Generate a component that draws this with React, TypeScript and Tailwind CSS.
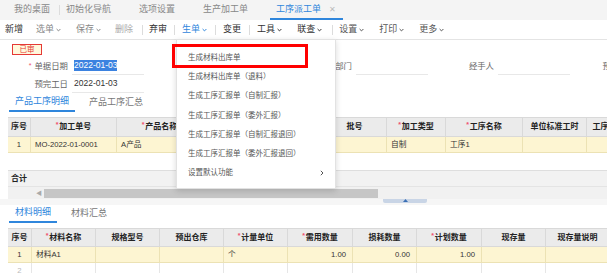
import React from "react";

type Col = { w: string; label: string; req?: boolean };

const cols1: Col[] = [
  { w: "w-[23px]", label: "序号" },
  { w: "w-[86px]", label: "加工单号", req: true },
  { w: "w-[86px]", label: "产品名称", req: true },
  { w: "w-[60px]", label: "规格型号" },
  { w: "w-[60px]", label: "单位" },
  { w: "w-[64px]", label: "批号" },
  { w: "w-[59px]", label: "加工类型", req: true },
  { w: "w-[77px]", label: "工序名称", req: true },
  { w: "w-[64px]", label: "单位标准工时" },
  { w: "w-[60px]", label: "工序计件单价" },
];

const cols2: Col[] = [
  { w: "w-[24px]", label: "序号" },
  { w: "w-[64px]", label: "材料名称", req: true },
  { w: "w-[64px]", label: "规格型号" },
  { w: "w-[64px]", label: "预出仓库" },
  { w: "w-[64px]", label: "计量单位", req: true },
  { w: "w-[65px]", label: "需用数量", req: true },
  { w: "w-[64px]", label: "损耗数量" },
  { w: "w-[65px]", label: "计划数量", req: true },
  { w: "w-[64px]", label: "现存量" },
  { w: "w-[64px]", label: "现存量说明" },
];

const menuItems = [
  "生成材料出库单",
  "生成材料出库单（退料）",
  "生成工序汇报单（自制汇报）",
  "生成工序汇报单（委外汇报）",
  "生成工序汇报单（自制汇报退回）",
  "生成工序汇报单（委外汇报退回）",
];

function Chevron() {
  return (
    <svg width="5" height="4" viewBox="0 0 5 4" className="ml-[2px]">
      <path d="M0.6 1 L2.5 2.9 L4.4 1" fill="none" stroke="currentColor" strokeWidth="1" />
    </svg>
  );
}

function Sep({ className }: { className: string }) {
  return <span className={`h-[10px] w-px bg-[#dcdcdc] ${className}`} />;
}

function HeaderRow({ cols, h }: { cols: Col[]; h: string }) {
  return (
    <div className={`flex ${h} bg-[#ebebeb] border-y border-[#d9d9d9]`}>
      {cols.map((c, i) => (
        <div
          key={i}
          className={`${c.w} shrink-0 flex items-center justify-center border-r border-[#d9d9d9] font-bold text-[8px] text-[#222] whitespace-nowrap overflow-hidden`}
        >
          {c.req && <span className="text-[#f0506e] text-[7px] mr-px -mt-[3px]">*</span>}
          {c.label}
        </div>
      ))}
    </div>
  );
}

function BodyRow({
  cols,
  cells,
  yellow,
  right,
}: {
  cols: Col[];
  cells: string[];
  yellow?: boolean;
  right?: number[];
}) {
  return (
    <div
      className={`flex h-[16px] border-b ${
        yellow ? "bg-[#fdf5d2] border-[#ece2b4]" : "bg-white border-[#e6e6e6]"
      }`}
    >
      {cols.map((c, i) => (
        <div
          key={i}
          className={`${c.w} shrink-0 flex items-center border-r ${
            yellow ? "border-[#ece2b4]" : "border-[#e6e6e6]"
          } text-[7.7px] whitespace-nowrap overflow-hidden ${
            i === 0
              ? "justify-center"
              : right && right.includes(i)
              ? "justify-end pr-[6px]"
              : "pl-[4px]"
          } ${yellow ? "text-[#333]" : "text-[#bbb]"}`}
        >
          {cells[i]}
        </div>
      ))}
    </div>
  );
}

export default function App() {
  return (
    <div className="relative w-[607px] h-[273px] overflow-hidden bg-white font-['Liberation_Sans','Noto_Sans_CJK_SC',sans-serif]">
      {/* page tabs */}
      <div className="flex items-center h-[20px] bg-[#f4f4f4] text-[9px] text-[#888] whitespace-nowrap">
        <span className="ml-[14px]">我的桌面</span>
        <Sep className="ml-[9px]" />
        <span className="ml-[6px]">初始化导航</span>
        <span className="ml-[28px]">选项设置</span>
        <span className="ml-[28px]">生产加工单</span>
        <div className="ml-[22px] h-[20px] w-[73px] flex items-center border-b-2 border-[#2f86dc] pt-[2px]">
          <span className="ml-[6px] text-[#2f86dc]">工序派工单</span>
          <span className="ml-[8px] text-[8px] text-[#bbb]">✕</span>
        </div>
      </div>

      {/* toolbar */}
      <div className="flex items-center h-[20px] border-b border-[#e4e4e4] text-[9px] whitespace-nowrap">
        <span className="ml-[5px] text-[#333]">新增</span>
        <span className="ml-[13px] flex items-center text-[#888]">选单<Chevron /></span>
        <span className="ml-[15px] flex items-center text-[#888]">保存<Chevron /></span>
        <span className="ml-[14px] text-[#aaa]">删除</span>
        <Sep className="ml-[9px]" />
        <span className="ml-[6px] text-[#333]">弃审</span>
        <Sep className="ml-[7px]" />
        <span className="ml-[7px] flex items-center text-[#2f86dc]">生单<Chevron /></span>
        <Sep className="ml-[8px]" />
        <span className="ml-[7px] text-[#333]">变更</span>
        <Sep className="ml-[8px]" />
        <span className="ml-[7px] flex items-center text-[#333]">工具<Chevron /></span>
        <span className="ml-[15px] flex items-center text-[#333]">联查<Chevron /></span>
        <Sep className="ml-[10px]" />
        <span className="ml-[6px] flex items-center text-[#555]">设置<Chevron /></span>
        <span className="ml-[15px] flex items-center text-[#555]">打印<Chevron /></span>
        <span className="ml-[15px] flex items-center text-[#555]">更多<Chevron /></span>
      </div>

      {/* header form */}
      <div className="pt-[4px]">
        <div className="ml-[12px] w-[30px] h-[11px] border border-[#e53935] bg-[#fff8dc] text-[#e53935] text-[7.5px] leading-[9px] text-center">
          已审
        </div>
        <div className="mt-[2px] flex h-[18px] text-[8.4px] whitespace-nowrap">
          <div className="ml-[2px] w-[142px] flex shrink-0">
            <div className="w-[66px] flex items-center justify-end text-[#666]">
              <span className="text-[#f0506e] text-[7px] mr-[3px]">*</span>单据日期
            </div>
            <div className="ml-[4px] w-[72px] flex items-center border-b border-[#e8e8e8] pl-[2px]">
              <span className="bg-[#3b82e0] text-white leading-[11px] text-[8.5px]">2022-01-03</span>
            </div>
          </div>
          <div className="w-[142px] flex shrink-0">
            <div className="w-[66px] flex items-center justify-end text-[#666]">生产车间</div>
            <div className="ml-[4px] w-[72px] border-b border-[#e8e8e8]" />
          </div>
          <div className="w-[142px] flex shrink-0">
            <div className="w-[66px] flex items-center justify-end text-[#666]">生产部门</div>
            <div className="ml-[4px] w-[72px] border-b border-[#e8e8e8]" />
          </div>
          <div className="w-[142px] flex shrink-0">
            <div className="w-[66px] flex items-center justify-end text-[#666]">经手人</div>
            <div className="ml-[4px] w-[72px] border-b border-[#e8e8e8]" />
          </div>
          <div className="w-[142px] flex shrink-0">
            <div className="w-[66px] flex items-center justify-end text-[#666]">预计开工</div>
          </div>
        </div>
        <div className="flex h-[18px] text-[8.4px] whitespace-nowrap">
          <div className="ml-[2px] w-[142px] flex shrink-0">
            <div className="w-[66px] flex items-center justify-end text-[#666]">预完工日</div>
            <div className="ml-[4px] w-[72px] flex items-center border-b border-[#e8e8e8] pl-[2px] text-[#333] text-[8.5px]">
              2022-01-03
            </div>
          </div>
        </div>
      </div>

      {/* product tabs */}
      <div className="flex h-[19px] text-[9px] whitespace-nowrap">
        <div className="ml-[9px] px-[6px] flex items-center border-b-2 border-[#2f86dc] text-[#2f86dc]">产品工序明细</div>
        <div className="ml-[8px] px-[6px] flex items-center text-[#777]">产品工序汇总</div>
      </div>

      {/* product table */}
      <div className="mt-[5px] ml-[8px]">
        <HeaderRow cols={cols1} h="h-[20px]" />
        <BodyRow
          cols={cols1}
          yellow
          cells={["1", "MO-2022-01-0001", "A产品", "", "", "", "自制", "工序1", "", ""]}
        />
        <div className="h-[17px]" />
        <div className="h-[16px] flex items-center bg-[#f2f2f2] border-t border-[#dedede] pl-[3px] text-[8px] font-bold text-[#222]">
          合计
        </div>
        <div className="h-[13px] flex items-center bg-[#f1f1f1] border-t border-[#e4e4e4]">
          <span className="ml-[28px] text-[6px] text-[#aaa]">◀</span>
          <div className="ml-[2px] w-[334px] h-[9px] bg-[#c6c6c6]" />
        </div>
      </div>

      {/* splitter */}
      <div className="h-[6px] bg-[#f6f6f6] flex">
        <div className="ml-[383px] w-[44px] h-[4px] rounded-b-[2px] bg-[#c9d5e6] flex justify-center">
          <svg width="5" height="3" viewBox="0 0 5 3">
            <path d="M0 3 L2.5 0 L5 3 Z" fill="#3a6fb5" />
          </svg>
        </div>
      </div>

      {/* material tabs */}
      <div className="flex h-[18px] text-[9px] whitespace-nowrap">
        <div className="ml-[9px] px-[6px] flex items-center border-b-2 border-[#2f86dc] text-[#2f86dc]">材料明细</div>
        <div className="ml-[8px] px-[6px] flex items-center text-[#777]">材料汇总</div>
      </div>

      {/* material table */}
      <div className="mt-[5px] ml-[8px]">
        <HeaderRow cols={cols2} h="h-[19px]" />
        <BodyRow
          cols={cols2}
          yellow
          right={[5, 6, 7]}
          cells={["1", "材料A1", "", "", "个", "1.00", "0.00", "1.00", "", ""]}
        />
        <BodyRow cols={cols2} cells={["2", "", "", "", "", "", "", "", "", ""]} />
      </div>

      {/* 生单 dropdown */}
      <div className="absolute left-[176px] top-[39px] w-[160px] h-[150px] bg-white border border-[#e2e2e2] shadow-[0_2px_6px_rgba(0,0,0,0.15)] pt-[8px] text-[7.5px] text-[#555] whitespace-nowrap">
        {menuItems.map((m) => (
          <div key={m} className="h-[19.2px] flex items-center pl-[11px]">
            {m}
          </div>
        ))}
        <div className="h-[19.2px] flex items-center pl-[11px] pr-[11px] justify-between">
          <span>设置默认功能</span>
          <svg width="4" height="6" viewBox="0 0 4 6">
            <path d="M0.8 0.8 L3 3 L0.8 5.2" fill="none" stroke="#555" strokeWidth="1" />
          </svg>
        </div>
      </div>
      <div className="absolute left-[172px] top-[44px] w-[136px] h-[24px] border-[3px] border-[#ff0000]" />
    </div>
  );
}
